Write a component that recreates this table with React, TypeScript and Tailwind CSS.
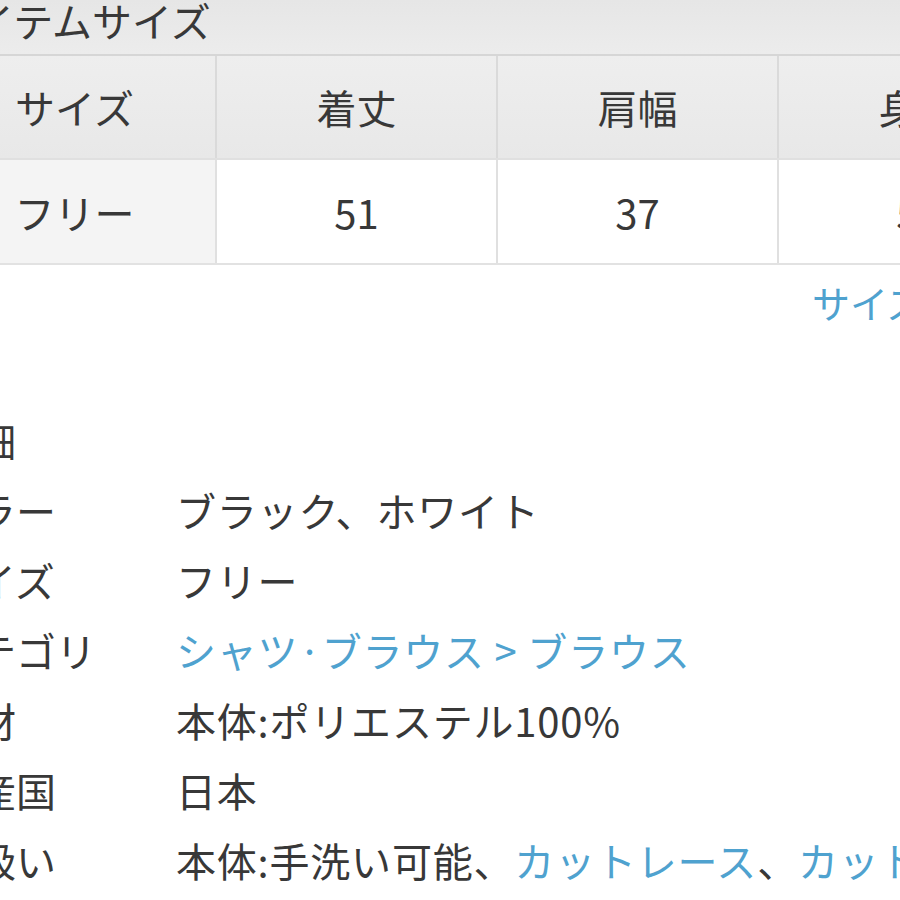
const font = {
  fontFamily: '"Noto Sans CJK JP", "Noto Sans", sans-serif',
};

const sizeHead = ["サイズ", "着丈", "肩幅", "身幅"];
const sizeRow = ["フリー", "51", "37", "52"];

type Part = { text: string; link?: boolean };

const details: { label: string; value: Part[] }[] = [
  { label: "カラー", value: [{ text: "ブラック、ホワイト" }] },
  { label: "サイズ", value: [{ text: "フリー" }] },
  { label: "カテゴリ", value: [{ text: "シャツ·ブラウス > ブラウス", link: true }] },
  { label: "素材", value: [{ text: "本体:ポリエステル100%" }] },
  { label: "生産国", value: [{ text: "日本" }] },
  {
    label: "取扱い",
    value: [
      { text: "本体:手洗い可能、" },
      { text: "カットレース", link: true },
      { text: "、" },
      { text: "カットソー", link: true },
    ],
  },
];

export default function App() {
  return (
    <div
      className="h-[900px] w-[900px] overflow-hidden bg-white text-[#383838]"
      style={font}
    >
      <div className="flex h-[56px] items-start border-b-2 border-[#d6d6d6] bg-gradient-to-b from-[#e6e6e6] to-[#ececec]">
        <span className="ml-[-64px] whitespace-nowrap text-[40px] leading-[40px]">
          アイテムサイズ
        </span>
      </div>

      <div className="ml-[-66px] w-[1200px]">
        <div className="flex h-[104px] border-b-2 border-[#e0e0e0] bg-gradient-to-b from-[#eeeeee] to-[#e8e8e8]">
          {sizeHead.map((h, i) => (
            <div
              key={h}
              className={`flex w-[281px] shrink-0 items-center justify-center text-[40px] ${
                i > 0 ? "border-l-2 border-[#dadada]" : ""
              }`}
            >
              {h}
            </div>
          ))}
        </div>
        <div className="flex h-[105px] border-b-2 border-[#e2e2e2]">
          {sizeRow.map((v, i) => (
            <div
              key={i}
              className={`flex w-[281px] shrink-0 items-center justify-center text-[40px] ${
                i > 0 ? "border-l-2 border-[#e0e0e0] bg-white" : "bg-[#f4f4f4]"
              }`}
            >
              {v}
            </div>
          ))}
        </div>
      </div>

      <div className="flex h-[72px] items-center pl-[812px]">
        <span className="whitespace-nowrap text-[38px] text-[#4fa2cf]">
          サイズの測り方
        </span>
      </div>

      <div className="mt-[68px] flex h-[70px] items-center">
        <span className="ml-[-144px] whitespace-nowrap text-[40px]">商品詳細</span>
      </div>

      <div className="ml-[-64px] flex flex-col">
        {details.map((d) => (
          <div key={d.label} className="flex h-[70px] items-center text-[40px]">
            <span className="w-[240px] shrink-0 whitespace-nowrap">{d.label}</span>
            <span className="whitespace-nowrap tracking-[0.02em]">
              {d.value.map((p, i) => (
                <span key={i} className={p.link ? "text-[#4fa2cf]" : ""}>
                  {p.text}
                </span>
              ))}
            </span>
          </div>
        ))}
      </div>
    </div>
  );
}
